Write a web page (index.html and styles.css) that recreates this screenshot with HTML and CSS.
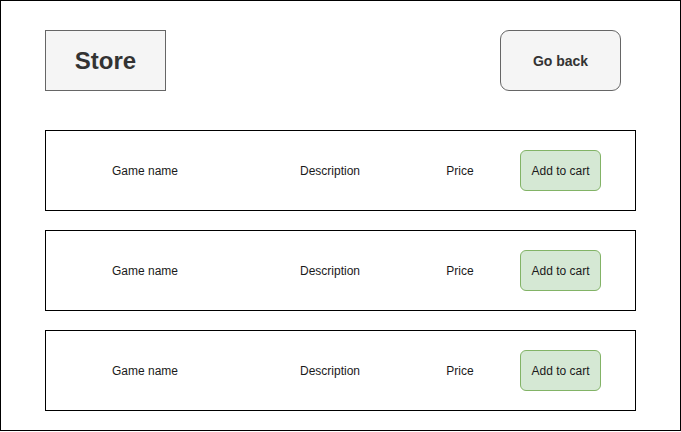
FILE: index.html
```html
<!DOCTYPE html>
<html>
<head>
<meta charset="utf-8">
<link rel="stylesheet" href="styles.css">
</head>
<body>
<div class="frame">
  <div class="header">
    <div class="title">Store</div>
    <div class="back">Go back</div>
  </div>
  <div class="list">
    <div class="row">
      <div class="cell">Game name</div>
      <div class="cell">Description</div>
      <div class="cell">Price</div>
      <div class="cart">Add to cart</div>
    </div>
    <div class="row">
      <div class="cell">Game name</div>
      <div class="cell">Description</div>
      <div class="cell">Price</div>
      <div class="cart">Add to cart</div>
    </div>
    <div class="row">
      <div class="cell">Game name</div>
      <div class="cell">Description</div>
      <div class="cell">Price</div>
      <div class="cart">Add to cart</div>
    </div>
  </div>
</div>
</body>
</html>
```
FILE: styles.css
```css
* { box-sizing: border-box; }
html, body { margin: 0; padding: 0; background: #fff; }
body { font-family: "Liberation Sans", Arial, sans-serif; color: #1a1a1a; }
.frame {
  width: 681px;
  height: 431px;
  border: 1px solid #000;
  padding: 29px 0 0 44px;
}
.header {
  display: flex;
  justify-content: space-between;
  width: 576px;
}
.title {
  width: 121px;
  height: 61px;
  border: 1px solid #666;
  background: #f5f5f5;
  color: #333;
  font-weight: bold;
  font-size: 24px;
  display: flex;
  align-items: center;
  justify-content: center;
}
.back {
  width: 121px;
  height: 61px;
  border: 1px solid #666;
  border-radius: 9px;
  background: #f5f5f5;
  color: #333;
  font-weight: bold;
  font-size: 14px;
  display: flex;
  align-items: center;
  justify-content: center;
}
.list {
  margin-top: 39px;
  display: flex;
  flex-direction: column;
  gap: 19px;
}
.row {
  width: 591px;
  height: 81px;
  border: 1px solid #000;
  display: grid;
  grid-template-columns: 198px 172px 88px 81px;
  align-items: center;
  font-size: 12px;
}
.cell { text-align: center; }
.cart {
  margin-left: 16px;
  width: 81px;
  height: 41px;
  border: 1px solid #82b366;
  border-radius: 6px;
  background: #d5e8d4;
  display: flex;
  align-items: center;
  justify-content: center;
}
```
